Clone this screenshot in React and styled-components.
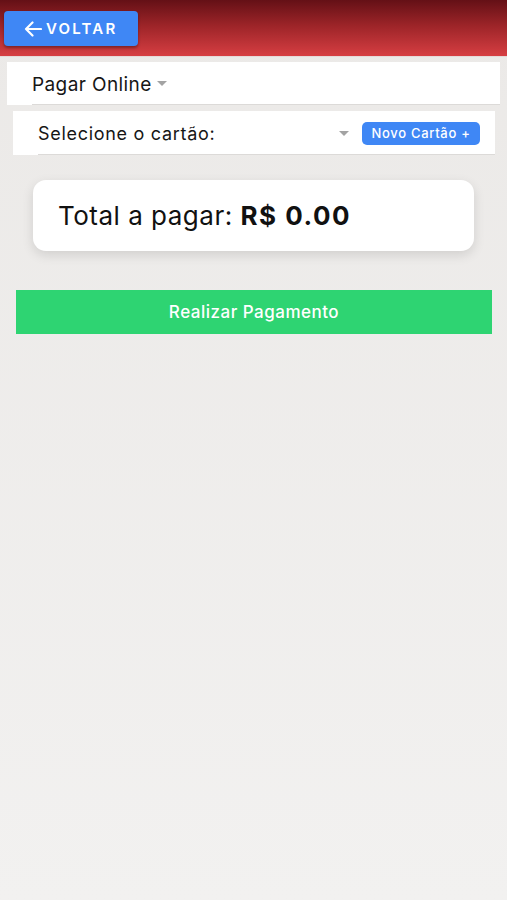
import React from 'react';
import styled, { createGlobalStyle } from 'styled-components';

const GlobalStyle = createGlobalStyle`
  html, body {
    margin: 0;
    padding: 0;
  }
  body {
    font-family: 'Inter', 'Liberation Sans', sans-serif;
    background: linear-gradient(180deg, #ebe9e7 0%, #f2f1f0 100%);
    min-height: 900px;
  }
`;

export default function App() {
  return (
    <Page>
      <GlobalStyle />
      <Header>
        <BackButton>
          <svg width="18" height="16" viewBox="0 0 18 16" fill="none">
            <path d="M17 8H2M8.5 1.5L2 8l6.5 6.5" stroke="#fff" strokeWidth="2.2" strokeLinecap="round" strokeLinejoin="round" />
          </svg>
          VOLTAR
        </BackButton>
      </Header>

      {/* forma de pagamento */}
      <PickerRow $left={7} $right={7} $top={5} $height={43}>
        <PickerLabel $size={19} $spacing={0.4}>Pagar Online</PickerLabel>
        <Caret />
      </PickerRow>

      {/* cartão */}
      <PickerRow $left={13} $right={12} $top={6} $height={44} $padRight={15}>
        <PickerLabel $size={18} $spacing={0.7} $grow>Selecione o cartão:</PickerLabel>
        <Caret />
        <NewCardButton>Novo Cartão +</NewCardButton>
      </PickerRow>

      <TotalCard>
        Total a pagar: <Amount>R$ 0.00</Amount>
      </TotalCard>

      <PayButton>Realizar Pagamento</PayButton>
    </Page>
  );
}

const Page = styled.div`
  display: flex;
  flex-direction: column;
  min-height: 900px;
`;

const Header = styled.div`
  height: 57px;
  box-sizing: border-box;
  padding: 11px 4px 0;
  background: linear-gradient(180deg, #641016 0%, #9c2428 45%, #d63e42 100%);
  border-bottom: 1px solid #e5d9d8;
`;

const BackButton = styled.button`
  display: flex;
  align-items: center;
  gap: 4px;
  width: 134px;
  height: 35px;
  padding: 0 0 0 20px;
  border: none;
  border-radius: 4px;
  background-color: #3f87f5;
  box-shadow: 0 2px 3px rgba(0, 0, 0, 0.35);
  color: #fff;
  font-family: 'Inter', 'Liberation Sans', sans-serif;
  font-size: 15px;
  font-weight: 600;
  letter-spacing: 2.2px;
  cursor: pointer;
`;

const PickerRow = styled.div`
  position: relative;
  display: flex;
  align-items: center;
  height: ${(p) => p.$height}px;
  margin: ${(p) => p.$top}px ${(p) => p.$right}px 0 ${(p) => p.$left}px;
  padding: 0 ${(p) => p.$padRight || 0}px 0 25px;
  background-color: #fff;
  /* underline of the picker, starts under the label */
  &::after {
    content: '';
    position: absolute;
    left: 25px;
    right: 0;
    bottom: 0;
    height: 1px;
    background-color: #dcdad8;
  }
`;

const PickerLabel = styled.span`
  flex: ${(p) => (p.$grow ? 1 : '0 0 auto')};
  font-size: ${(p) => p.$size}px;
  letter-spacing: ${(p) => p.$spacing}px;
  color: #161616;
  padding-top: 1px;
`;

const Caret = styled.span`
  width: 0;
  height: 0;
  margin: 0 13px 0 5px;
  border-left: 5px solid transparent;
  border-right: 5px solid transparent;
  border-top: 5px solid #a3a3a3;
`;

const NewCardButton = styled.button`
  height: 23px;
  width: 118px;
  padding: 0;
  border: none;
  border-radius: 5px;
  background-color: #3f87f5;
  color: #fff;
  font-family: 'Inter', 'Liberation Sans', sans-serif;
  font-size: 13px;
  font-weight: 500;
  letter-spacing: 0.7px;
  cursor: pointer;
`;

const TotalCard = styled.div`
  margin: 25px 33px 0;
  height: 71px;
  box-sizing: border-box;
  padding: 0 25px;
  display: flex;
  align-items: center;
  background-color: #fff;
  border-radius: 13px;
  box-shadow: 0 4px 12px rgba(0, 0, 0, 0.12);
  font-size: 26px;
  letter-spacing: 0.5px;
  color: #111;
  white-space: pre;
`;

const Amount = styled.strong`
  font-weight: 700;
  letter-spacing: 1.5px;
`;

const PayButton = styled.button`
  margin: 39px 15px 0 16px;
  height: 44px;
  border: none;
  background-color: #2ed472;
  color: #fff;
  font-family: 'Inter', 'Liberation Sans', sans-serif;
  font-size: 17px;
  font-weight: 500;
  letter-spacing: 0.5px;
  cursor: pointer;
`;
